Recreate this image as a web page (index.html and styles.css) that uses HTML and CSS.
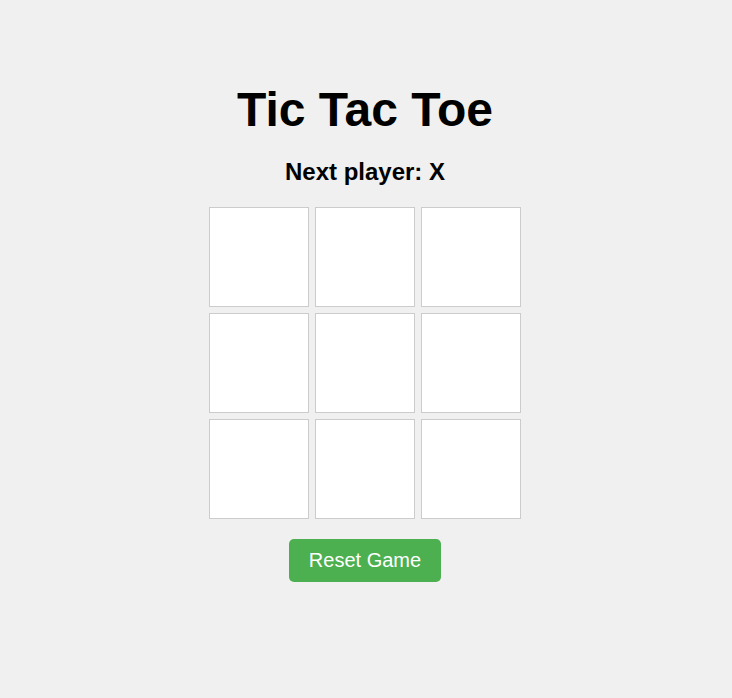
FILE: index.html
```html
<!DOCTYPE html>
<html lang="en">
<head>
<meta charset="utf-8">
<title>Tic Tac Toe</title>
<link rel="stylesheet" href="styles.css">
</head>
<body>
<main class="game">
  <h1 class="title">Tic Tac Toe</h1>
  <h2 class="status">Next player: X</h2>
  <div class="board">
    <button class="cell"></button>
    <button class="cell"></button>
    <button class="cell"></button>
    <button class="cell"></button>
    <button class="cell"></button>
    <button class="cell"></button>
    <button class="cell"></button>
    <button class="cell"></button>
    <button class="cell"></button>
  </div>
  <button class="reset">Reset Game</button>
</main>
</body>
</html>
```
FILE: styles.css
```css
html, body {
  margin: 0;
  padding: 0;
  background: #f0f0f0;
  font-family: "Liberation Sans", Arial, sans-serif;
}
.game {
  display: flex;
  flex-direction: column;
  align-items: center;
  padding-top: 82px;
  padding-right: 2px;
}
.title {
  margin: 0 0 21px;
  font-size: 48px;
  font-weight: bold;
  color: #000;
}
.status {
  margin: 0 0 21px;
  font-size: 24px;
  font-weight: bold;
  color: #000;
}
.board {
  display: grid;
  grid-template-columns: repeat(3, 100px);
  grid-template-rows: repeat(3, 100px);
  gap: 6px;
}
.cell {
  box-sizing: border-box;
  width: 100px;
  height: 100px;
  margin: 0;
  padding: 0;
  background: #fff;
  border: 1px solid #ccc;
  font-size: 48px;
  font-family: inherit;
}
.reset {
  margin-top: 20px;
  padding: 10px 20px;
  font-size: 20px;
  font-family: inherit;
  color: #fff;
  background: #4caf50;
  border: none;
  border-radius: 5px;
}
```
